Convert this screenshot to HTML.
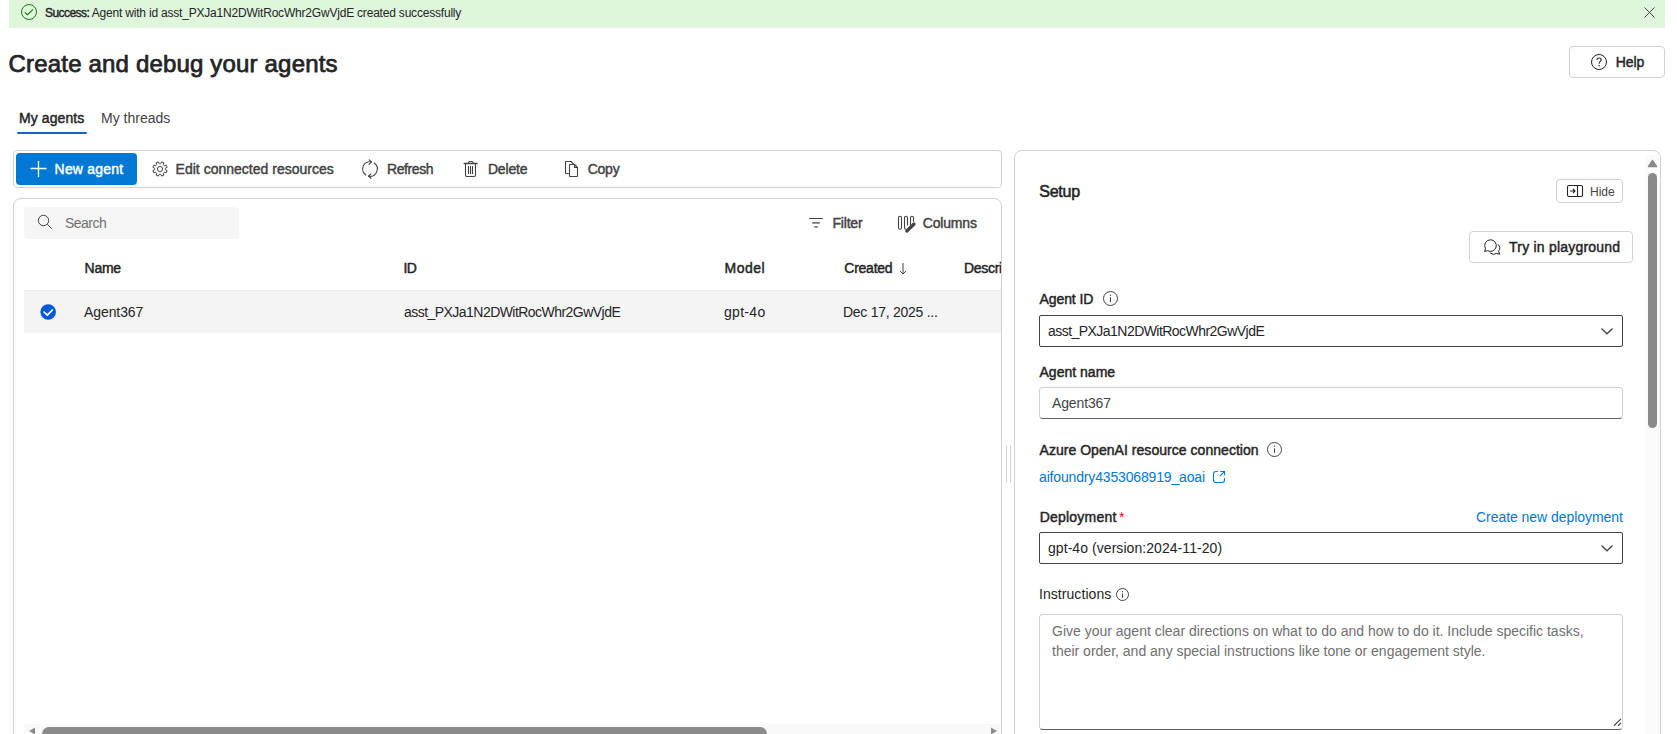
<!DOCTYPE html>
<html><head><meta charset="utf-8">
<style>
html,body{margin:0;padding:0;background:#fff;width:1677px;height:734px;overflow:hidden;position:relative;font-family:"Liberation Sans",sans-serif;color:#242424}
.a{position:absolute}
.t{position:absolute;white-space:pre;font-family:"Liberation Sans",sans-serif}
.s12{font-size:12px;line-height:12px}
.s14{font-size:14px;line-height:14px}
.s16{font-size:16px;line-height:16px}
.s24{font-size:24px;line-height:24px}
.b{font-weight:400;-webkit-text-stroke-width:0.45px}
.b24{font-weight:400;-webkit-text-stroke-width:0.75px}
.box{position:absolute;box-sizing:border-box}
svg{position:absolute;overflow:visible}
</style></head><body>

<!-- Success banner -->
<div class="box" style="left:9px;top:0;width:1656px;height:28px;background:#dff6dd"></div>
<svg style="left:21px;top:4px" width="16" height="16" viewBox="0 0 16 16"><circle cx="8" cy="8" r="7.5" fill="none" stroke="#107c10" stroke-width="1"/><path d="M3.8 8.3 L6.5 10.7 L12 5.3" fill="none" stroke="#107c10" stroke-width="1.1"/></svg>
<div class="t s12" style="left:45px;top:7px;color:#242424;letter-spacing:-0.2px"><b style="font-weight:400;-webkit-text-stroke-width:0.4px;letter-spacing:-0.55px">Success:</b> Agent with id asst_PXJa1N2DWitRocWhr2GwVjdE created successfully</div>
<svg style="left:1644px;top:7px" width="11" height="11" viewBox="0 0 11 11"><path d="M0.5 0.5 L10.5 10.5 M10.5 0.5 L0.5 10.5" stroke="#424242" stroke-width="1"/></svg>

<!-- Title -->
<div class="t s24 b24" style="left:8.6px;top:52px;color:#242424;letter-spacing:0.174px">Create and debug your agents</div>

<!-- Help button -->
<div class="box" style="left:1569px;top:46px;width:96px;height:32px;border:1px solid #d1d1d1;border-radius:4px"></div>
<svg style="left:1591px;top:54px" width="16" height="16" viewBox="0 0 16 16"><circle cx="8" cy="8" r="7.5" fill="none" stroke="#242424" stroke-width="1"/><path d="M5.9 6.1 C5.9 4.8 6.8 4 8 4 C9.2 4 10.1 4.8 10.1 5.9 C10.1 7.3 8.1 7.7 8.1 9.8" fill="none" stroke="#242424" stroke-width="1.05"/><circle cx="8.1" cy="11.7" r="0.75" fill="#242424"/></svg>
<div class="t s14 b" style="left:1615.8px;top:55px;letter-spacing:-0.133px">Help</div>

<!-- Tabs -->
<div class="t s14 b" style="left:19px;top:111px;color:#242424;letter-spacing:0.087px">My agents</div>
<div class="t s14" style="left:101px;top:111px;color:#424242">My threads</div>
<div class="box" style="left:17px;top:132px;width:70px;height:2px;background:#0a67d0;border-radius:1px"></div>

<!-- Toolbar -->
<div class="box" style="left:13px;top:150px;width:989px;height:38px;border:1px solid #d1d1d1;border-radius:4px"></div>
<div class="box" style="left:16px;top:153px;width:121px;height:32px;background:#0078d4;border-radius:4px"></div>
<svg style="left:30px;top:161px" width="17" height="16" viewBox="0 0 17 16"><path d="M8.5 0 V16 M0.5 7.5 H16.5" stroke="#fff" stroke-width="1.3"/></svg>
<div class="t s14 b" style="left:54.6px;top:162px;color:#fff;letter-spacing:0.188px">New agent</div>

<svg style="left:152px;top:161px" width="16" height="16" viewBox="0 0 16 16"><g fill="none" stroke="#424242" stroke-width="1"><path d="M8.70 2.65 L9.70 0.90 L11.81 1.78 L11.29 3.72 L12.28 4.71 L14.22 4.19 L15.10 6.30 L13.35 7.30 L13.35 8.70 L15.10 9.70 L14.22 11.81 L12.28 11.29 L11.29 12.28 L11.81 14.22 L9.70 15.10 L8.70 13.35 L7.30 13.35 L6.30 15.10 L4.19 14.22 L4.71 12.28 L3.72 11.29 L1.78 11.81 L0.90 9.70 L2.65 8.70 L2.65 7.30 L0.90 6.30 L1.78 4.19 L3.72 4.71 L4.71 3.72 L4.19 1.78 L6.30 0.90 L7.30 2.65 Z" stroke-linejoin="round"/><circle cx="8" cy="8" r="2.6"/></g></svg>
<div class="t s14 b" style="left:175.6px;top:162px;color:#424242;letter-spacing:0.009px">Edit connected resources</div>

<svg style="left:362px;top:161px" width="16" height="16" viewBox="0 0 16 16"><g fill="none" stroke="#424242" stroke-width="1.1" stroke-linecap="round" stroke-linejoin="round"><path d="M9.39 0.83 A7.3 7.3 0 0 0 3.81 13.98"/><path d="M7.2 -1.1 L9.5 0.9 L7.1 3.3"/><path d="M12.19 2.02 A7.3 7.3 0 0 1 6.61 15.16"/><path d="M8.9 12.8 L6.6 15.1 L8.9 17.3"/></g></svg>
<div class="t s14 b" style="left:387.0px;top:162px;color:#424242;letter-spacing:-0.417px">Refresh</div>

<svg style="left:458px;top:157px" width="26" height="24" viewBox="0 0 26 24"><g fill="none" stroke="#424242" stroke-width="1.1"><path d="M6.2 6.5 H19.1" stroke-width="1.3" stroke-linecap="round"/><path d="M10.5 6.5 V5.5 A1 1 0 0 1 11.5 4.5 H14 A1 1 0 0 1 15 5.5 V6.5"/><path d="M7.5 6.5 V18.3 A1.2 1.2 0 0 0 8.7 19.5 H16.3 A1.2 1.2 0 0 0 17.5 18.3 V6.5"/><path d="M10.5 9 V17 M12.5 9 V17 M14.5 9 V17"/></g></svg>
<div class="t s14 b" style="left:487.9px;top:162px;color:#424242;letter-spacing:-0.160px">Delete</div>

<svg style="left:558px;top:157px" width="26" height="24" viewBox="0 0 26 24"><g fill="none" stroke="#424242" stroke-width="1.1" stroke-linejoin="round"><path d="M10.8 16.5 H8 A0.5 0.5 0 0 1 7.5 16 V5 A0.5 0.5 0 0 1 8 4.5 H13 L15.8 7.3"/><path d="M11.5 8 A0.5 0.5 0 0 1 12 7.5 H16.5 L19.5 10.5 V19 A0.5 0.5 0 0 1 19 19.5 H12 A0.5 0.5 0 0 1 11.5 19 Z"/><path d="M16.5 7.5 V10.5 H19.5"/></g></svg>
<div class="t s14 b" style="left:587.7px;top:162px;color:#424242;letter-spacing:-0.233px">Copy</div>

<!-- Table container -->
<div class="box" style="left:13px;top:198px;width:989px;height:600px;border:1px solid #d1d1d1;border-radius:8px"></div>
<div class="box" style="left:24px;top:207px;width:215px;height:32px;background:#f5f5f5;border-radius:4px"></div>
<svg style="left:37px;top:214px" width="16" height="16" viewBox="0 0 16 16"><g fill="none" stroke="#424242" stroke-width="1"><circle cx="6.5" cy="6.5" r="5.2"/><path d="M10.3 10.3 L14.8 14.8"/></g></svg>
<div class="t s14" style="left:65px;top:216px;color:#707070;letter-spacing:-0.52px">Search</div>

<svg style="left:804px;top:210px" width="26" height="26" viewBox="0 0 26 26"><g stroke="#424242" stroke-width="1.2" stroke-linecap="round"><path d="M5.6 8.5 H18.3 M8.6 12.9 H15.4 M10.8 16.9 H13.3"/></g></svg>
<div class="t s14 b" style="left:832.5px;top:216px;color:#424242;letter-spacing:-0.200px">Filter</div>
<svg style="left:893px;top:210px" width="28" height="26" viewBox="0 0 28 26"><g fill="none" stroke="#424242" stroke-width="1.1"><rect x="5.5" y="6.2" width="3" height="13" rx="1.5"/><path d="M14.5 15.6 V7.7 A1.5 1.5 0 0 0 11.5 7.7 V17.7 A1.5 1.5 0 0 0 13 19.2"/><path d="M20.5 11.7 V7.7 A1.5 1.5 0 0 0 17.5 7.7 V15.2"/></g><path d="M13.8 21 L21 14" stroke="#424242" stroke-width="3.2" stroke-linecap="round"/></svg>
<div class="t s14 b" style="left:922.8px;top:216px;color:#424242;letter-spacing:-0.183px">Columns</div>

<!-- header -->
<div class="t s14 b" style="left:84.6px;top:261px;color:#242424;letter-spacing:-0.300px">Name</div>
<div class="t s14 b" style="left:403.6px;top:261px;color:#242424;letter-spacing:-0.700px">ID</div>
<div class="t s14 b" style="left:724.5px;top:261px;color:#242424;letter-spacing:0.525px">Model</div>
<div class="t s14 b" style="left:844.3px;top:261px;color:#242424;letter-spacing:-0.250px">Created</div>
<svg style="left:899px;top:263px" width="8" height="12" viewBox="0 0 8 12"><path d="M4 0 V11 M1 8 L4 11 L7 8" fill="none" stroke="#424242" stroke-width="1"/></svg>
<div class="a" style="left:963px;top:255px;width:38px;height:30px;overflow:hidden"><div class="t s14 b" style="left:1px;top:6px;color:#242424;letter-spacing:-0.3px">Description</div></div>

<!-- row -->
<div class="box" style="left:24px;top:290px;width:977px;height:43px;background:#f4f4f4;border-top:1px solid #ebebeb"></div>
<svg style="left:40px;top:304px" width="16" height="16" viewBox="0 0 16 16"><circle cx="8.15" cy="7.95" r="7.8" fill="#005ad6"/><path d="M4.1 8.2 L7.3 11.2 L12.4 6" fill="none" stroke="#fff" stroke-width="1.7" stroke-linecap="round" stroke-linejoin="round"/></svg>
<div class="t s14" style="left:84px;top:305px;color:#242424;letter-spacing:-0.09px">Agent367</div>
<div class="t s14" style="left:404px;top:305px;color:#242424;letter-spacing:-0.54px">asst_PXJa1N2DWitRocWhr2GwVjdE</div>
<div class="t s14" style="left:724px;top:305px;color:#242424;letter-spacing:0.3px">gpt-4o</div>
<div class="t s14" style="left:843px;top:305px;color:#242424;letter-spacing:-0.27px">Dec 17, 2025 ...</div>

<!-- horizontal scrollbar -->
<div class="box" style="left:24px;top:724px;width:976px;height:10px;background:#f9f9f9"></div>
<div class="box" style="left:42px;top:727px;width:725px;height:14px;background:#8a8a8a;border-radius:7px"></div>
<svg style="left:28px;top:727px" width="8" height="8" viewBox="0 0 8 8"><path d="M7 0.5 L7 7.5 L1 4 Z" fill="#8a8a8a"/></svg>
<svg style="left:990px;top:727px" width="8" height="8" viewBox="0 0 8 8"><path d="M1 0.5 L1 7.5 L7 4 Z" fill="#8a8a8a"/></svg>

<!-- splitter grip -->
<div class="box" style="left:1006px;top:446px;width:1px;height:36px;background:#d1d1d1"></div>
<div class="box" style="left:1010px;top:446px;width:1px;height:36px;background:#d1d1d1"></div>

<!-- Right panel -->
<div class="box" style="left:1014px;top:150px;width:647px;height:650px;border:1px solid #d1d1d1;border-radius:8px"></div>
<!-- vertical scrollbar -->
<div class="box" style="left:1645px;top:155px;width:15px;height:579px;background:#fbfbfb"></div><svg style="left:1647px;top:159px" width="11" height="9" viewBox="0 0 11 9"><path d="M1.3 7.6 L9.7 7.6 L5.5 1.3 Z" fill="#8a8a8a" stroke="#8a8a8a" stroke-width="1.2" stroke-linejoin="round"/></svg>
<div class="box" style="left:1648px;top:173px;width:9px;height:255px;background:#8a8a8a;border-radius:5px"></div>

<div class="t s16 b" style="-webkit-text-stroke-width:0.55px;left:1039.2px;top:184px;color:#242424;letter-spacing:-0.200px">Setup</div>

<div class="box" style="left:1556px;top:179px;width:67px;height:24px;border:1px solid #d1d1d1;border-radius:4px"></div>
<svg style="left:1567px;top:185px" width="16" height="12" viewBox="0 0 16 12"><g fill="none" stroke="#242424" stroke-width="1.1"><rect x="0.5" y="0.5" width="15" height="11" rx="1.5"/><path d="M10.5 0.5 V11.5"/><path d="M3 6 H8 M6 4 L8 6 L6 8"/></g></svg>
<div class="t s12" style="left:1590px;top:186px;color:#424242">Hide</div>

<div class="box" style="left:1469px;top:231px;width:164px;height:32px;border:1px solid #d1d1d1;border-radius:4px"></div>
<svg style="left:1484px;top:239px" width="17" height="16" viewBox="0 0 17 16"><g fill="none" stroke="#242424" stroke-width="1"><path d="M6.5 0.8 A5.8 5.8 0 1 1 3.7 11.7 L0.6 12.4 L1.5 9.6 A5.8 5.8 0 0 1 6.5 0.8 Z" stroke-linejoin="round"/><path d="M13.8 5.2 A5.5 5.5 0 0 1 14.6 12.4 L15.8 15.2 L12.6 14.5 A5.5 5.5 0 0 1 6.2 13.9"/></g></svg>
<div class="t s14 b" style="left:1509.1px;top:240px;color:#242424;letter-spacing:0.212px">Try in playground</div>

<!-- Agent ID -->
<div class="t s14 b" style="left:1039.5px;top:292px;color:#242424;letter-spacing:-0.086px">Agent ID</div>
<svg style="left:1103px;top:291px" width="15" height="15" viewBox="0 0 15 15"><g fill="none" stroke="#424242" stroke-width="1"><circle cx="7.5" cy="7.5" r="7"/><path d="M7.5 6.3 V11"/></g><circle cx="7.5" cy="4.3" r="0.7" fill="#424242"/></svg>
<div class="box" style="left:1039px;top:315px;width:584px;height:32px;border:1px solid #424242;border-radius:2px"></div>
<div class="t s14" style="left:1048px;top:324px;letter-spacing:-0.54px;color:#242424">asst_PXJa1N2DWitRocWhr2GwVjdE</div>
<svg style="left:1601px;top:328px" width="12" height="7" viewBox="0 0 12 7"><path d="M0.5 0.5 L6 5.8 L11.5 0.5" fill="none" stroke="#424242" stroke-width="1.2"/></svg>

<!-- Agent name -->
<div class="t s14 b" style="left:1039.5px;top:365px;color:#242424;letter-spacing:0.011px">Agent name</div>
<div class="box" style="left:1039px;top:387px;width:584px;height:32px;border:1px solid #d1d1d1;border-bottom-color:#616161;border-radius:4px"></div>
<div class="t s14" style="left:1052px;top:396px;letter-spacing:-0.14px;color:#424242">Agent367</div>

<!-- Azure OpenAI -->
<div class="t s14 b" style="left:1039.5px;top:443px;color:#242424;letter-spacing:0.039px">Azure OpenAI resource connection</div>
<svg style="left:1267px;top:442px" width="15" height="15" viewBox="0 0 15 15"><g fill="none" stroke="#424242" stroke-width="1"><circle cx="7.5" cy="7.5" r="7"/><path d="M7.5 6.3 V11"/></g><circle cx="7.5" cy="4.3" r="0.7" fill="#424242"/></svg>
<div class="t s14" style="left:1039px;top:470px;letter-spacing:-0.16px;color:#0078d4">aifoundry4353068919_aoai</div>
<svg style="left:1213px;top:471px" width="13" height="13" viewBox="0 0 13 13"><g fill="none" stroke="#0078d4" stroke-width="1.1"><path d="M4.8 0.5 H3 A2.5 2.5 0 0 0 0.5 3 V9 A2.5 2.5 0 0 0 3 11.5 H9 A2.5 2.5 0 0 0 11.5 9 V7"/><path d="M7.3 0.5 H11.5 V4.3"/><path d="M11.3 0.7 L6.8 5.2"/></g></svg>

<!-- Deployment -->
<div class="t s14 b" style="left:1039.7px;top:510px;color:#242424;letter-spacing:0.211px">Deployment</div>
<div class="t s14" style="left:1119px;top:510px;color:#c50f1f">*</div>
<div class="t s14" style="left:1476px;top:510px;letter-spacing:-0.05px;color:#0078d4">Create new deployment</div>
<div class="box" style="left:1039px;top:532px;width:584px;height:32px;border:1px solid #424242;border-radius:2px"></div>
<div class="t s14" style="left:1048px;top:541px;letter-spacing:0.06px;color:#242424">gpt-4o (version:2024-11-20)</div>
<svg style="left:1601px;top:545px" width="12" height="7" viewBox="0 0 12 7"><path d="M0.5 0.5 L6 5.8 L11.5 0.5" fill="none" stroke="#424242" stroke-width="1.2"/></svg>

<!-- Instructions -->
<div class="t s14" style="left:1039px;top:587px;letter-spacing:0.06px;color:#242424">Instructions</div>
<svg style="left:1116px;top:588px" width="13" height="13" viewBox="0 0 13 13"><g fill="none" stroke="#424242" stroke-width="1"><circle cx="6.5" cy="6.5" r="6"/><path d="M6.5 5.5 V9.5"/></g><circle cx="6.5" cy="3.7" r="0.65" fill="#424242"/></svg>
<div class="box" style="left:1039px;top:614px;width:584px;height:116px;border:1px solid #d1d1d1;border-bottom-color:#616161;border-radius:4px"></div>
<div class="t" style="left:1052px;top:621px;font-size:14px;line-height:20px;color:#707070">Give your agent clear directions on what to do and how to do it. Include specific tasks,
their order, and any special instructions like tone or engagement style.</div>
<svg style="left:1613px;top:719px" width="9" height="9" viewBox="0 0 9 9"><path d="M7.7 0.2 L1.2 6.5 M7.7 4.1 L5.4 6.5" stroke="#424242" stroke-width="1.1" stroke-linecap="round"/></svg>

</body></html>
